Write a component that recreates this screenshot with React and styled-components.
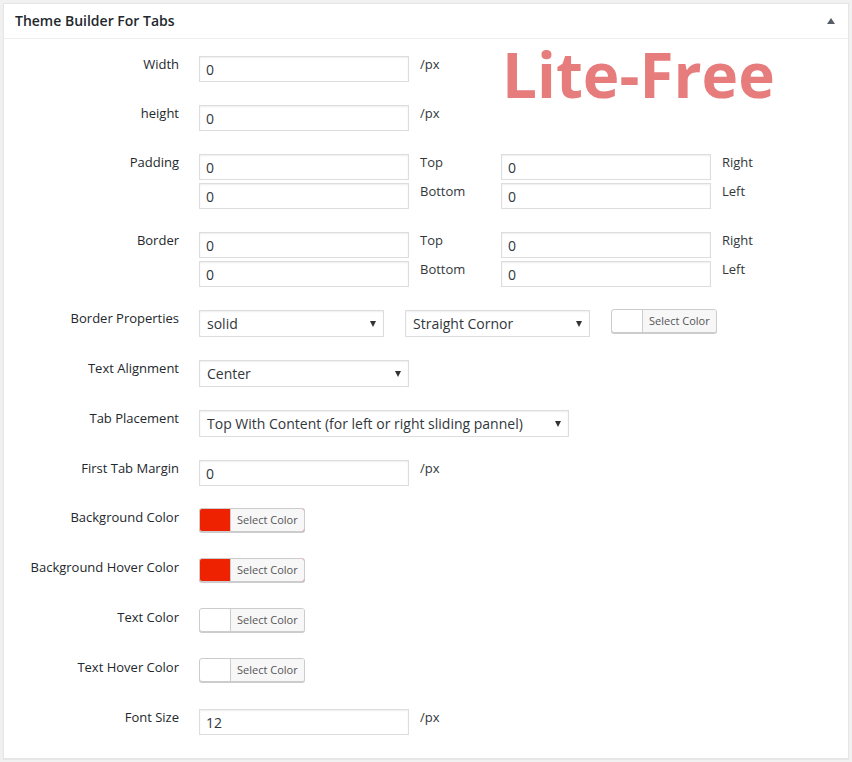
import React from 'react';
import styled, { createGlobalStyle } from 'styled-components';

const GlobalStyle = createGlobalStyle`
  html, body {
    margin: 0;
    padding: 0;
    background: #f1f1f1;
  }
  body {
    padding: 3px;
    font-family: "Open Sans", "Liberation Sans", sans-serif;
    font-size: 13px;
    color: #23282d;
  }
`;

const Panel = styled.div`
  position: relative;
  width: 844px;
  background: #fff;
  border: 1px solid #e5e5e5;
  box-shadow: 0 1px 1px rgba(0, 0, 0, 0.04);
`;

const Header = styled.div`
  display: flex;
  align-items: center;
  justify-content: space-between;
  height: 34px;
  padding: 0 13px 0 11px;
  border-bottom: 1px solid #eee;
`;

const Title = styled.h2`
  margin: 0;
  font-size: 14px;
  font-weight: 600;
  color: #23282d;
  line-height: 1.4;
`;

const Toggle = styled.span`
  width: 0;
  height: 0;
  border-left: 4px solid transparent;
  border-right: 4px solid transparent;
  border-bottom: 6px solid #555d66;
  margin-top: -1px;
`;

const Watermark = styled.div`
  position: absolute;
  left: 498px;
  top: 39px;
  font-size: 62px;
  line-height: 62px;
  font-weight: 700;
  color: #e67c7c;
  pointer-events: none;
`;

const Table = styled.div`
  padding: 5.5px 0 11.5px;
`;

const Row = styled.div`
  display: grid;
  grid-template-columns: 185px 1fr;
  padding: 11.5px 0;
`;

const Label = styled.div`
  text-align: right;
  padding-right: 10px;
  line-height: 17px;
  color: #23282d;
`;

const Cell = styled.div`
  padding-left: 10px;
  display: flex;
  align-items: flex-start;
`;

const Input = styled.div`
  box-sizing: border-box;
  width: ${(p) => p.$w || 210}px;
  height: 26px;
  border: 1px solid #ddd;
  box-shadow: inset 0 1px 2px rgba(0, 0, 0, 0.07);
  padding: 0 6px;
  font-size: 14px;
  line-height: 26px;
  color: #32373c;
  background: #fff;
`;

const Unit = styled.span`
  padding-left: 11px;
  line-height: 17px;
  color: #32373c;
`;

const Quad = styled.div`
  display: grid;
  grid-template-columns: 210px 92px 210px auto;
  row-gap: 3px;
`;

const SubLabel = styled.span`
  padding-left: 11px;
  line-height: 17px;
  color: #32373c;
`;

const Select = styled.div`
  box-sizing: border-box;
  display: flex;
  align-items: center;
  justify-content: space-between;
  width: ${(p) => p.$w}px;
  height: 27px;
  border: 1px solid #ddd;
  box-shadow: inset 0 1px 2px rgba(0, 0, 0, 0.07);
  padding: 0 7px 0 7px;
  margin-right: ${(p) => p.$mr || 0}px;
  font-size: 14px;
  color: #32373c;
  background: #fff;
`;

const Arrow = styled.span`
  width: 0;
  height: 0;
  border-left: 3.5px solid transparent;
  border-right: 3.5px solid transparent;
  border-top: 6px solid #333;
`;

const Picker = styled.div`
  box-sizing: border-box;
  display: flex;
  height: 24px;
  margin: -1px 0 4px;
  border: 1px solid #ccc;
  border-radius: 3px;
  box-shadow: 0 1px 0 #ccc;
  background: ${(p) => p.$color};
  overflow: hidden;
`;

const PickerButton = styled.span`
  margin-left: 30px;
  padding: 0 6px;
  border-left: 1px solid #ccc;
  background: #f7f7f7;
  font-size: 11px;
  line-height: 22px;
  color: #555;
`;

const ColorPicker = ({ color }) => (
  <Picker $color={color}>
    <PickerButton>Select Color</PickerButton>
  </Picker>
);

const PxRow = ({ label, value }) => (
  <Row>
    <Label>{label}</Label>
    <Cell>
      <Input>{value}</Input>
      <Unit>/px</Unit>
    </Cell>
  </Row>
);

const QuadRow = ({ label }) => (
  <Row>
    <Label>{label}</Label>
    <Cell>
      <Quad>
        <Input>0</Input>
        <SubLabel>Top</SubLabel>
        <Input>0</Input>
        <SubLabel>Right</SubLabel>
        <Input>0</Input>
        <SubLabel>Bottom</SubLabel>
        <Input>0</Input>
        <SubLabel>Left</SubLabel>
      </Quad>
    </Cell>
  </Row>
);

const ColorRow = ({ label, color }) => (
  <Row>
    <Label>{label}</Label>
    <Cell>
      <ColorPicker color={color} />
    </Cell>
  </Row>
);

const SelectRow = ({ label, value, w }) => (
  <Row>
    <Label>{label}</Label>
    <Cell>
      <Select $w={w}>
        {value}
        <Arrow />
      </Select>
    </Cell>
  </Row>
);

export default function App() {
  return (
    <>
      <GlobalStyle />
      <Panel>
        <Header>
          <Title>Theme Builder For Tabs</Title>
          <Toggle />
        </Header>
        <Watermark>Lite-Free</Watermark>
        <Table>
          <PxRow label="Width" value="0" />
          <PxRow label="height" value="0" />
          <QuadRow label="Padding" />
          <QuadRow label="Border" />
          <Row>
            <Label>Border Properties</Label>
            <Cell>
              <Select $w={185} $mr={21}>
                solid
                <Arrow />
              </Select>
              <Select $w={185} $mr={21}>
                Straight Cornor
                <Arrow />
              </Select>
              <ColorPicker color="#fff" />
            </Cell>
          </Row>
          <SelectRow label="Text Alignment" value="Center" w={210} />
          <SelectRow label="Tab Placement" value="Top With Content (for left or right sliding pannel)" w={370} />
          <PxRow label="First Tab Margin" value="0" />
          <ColorRow label="Background Color" color="#ee2200" />
          <ColorRow label="Background Hover Color" color="#ee2200" />
          <ColorRow label="Text Color" color="#fff" />
          <ColorRow label="Text Hover Color" color="#fff" />
          <PxRow label="Font Size" value="12" />
        </Table>
      </Panel>
    </>
  );
}
